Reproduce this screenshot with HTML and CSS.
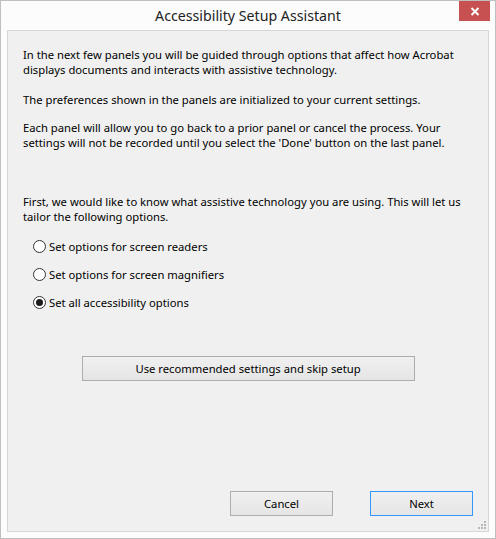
FILE: index.html
```html
<!DOCTYPE html>
<html>
<head>
<meta charset="utf-8">
<link rel="stylesheet" href="styles.css">
</head>
<body>
<div class="window">
  <div class="titlebar">
    <div class="tb-spacer"></div>
    <div class="title">Accessibility Setup Assistant</div>
    <div class="tb-right">
      <div class="close">
        <svg width="10" height="9" viewBox="0 0 10 9"><path d="M1.5 1 L8.5 8 M8.5 1 L1.5 8" stroke="#fff" stroke-width="2" fill="none"/></svg>
      </div>
    </div>
  </div>
  <div class="client">
    <p class="p1">In the next few panels you will be guided through options that affect how Acrobat displays documents and interacts with assistive technology.</p>
    <p class="p2">The preferences shown in the panels are initialized to your current settings.</p>
    <p class="p3">Each panel will allow you to go back to a prior panel or cancel the process. Your settings will not be recorded until you select the 'Done' button on the last panel.</p>
    <p class="p4">First, we would like to know what assistive technology you are using. This will let us tailor the following options.</p>
    <div class="radios">
      <div class="radio"><span class="circle"></span><span>Set options for screen readers</span></div>
      <div class="radio"><span class="circle"></span><span>Set options for screen magnifiers</span></div>
      <div class="radio"><span class="circle checked"></span><span>Set all accessibility options</span></div>
    </div>
    <div class="center-row">
      <div class="btn wide">Use recommended settings and skip setup</div>
    </div>
    <div class="spacer"></div>
    <div class="bottom-row">
      <div class="btn small">Cancel</div>
      <div class="btn small default">Next</div>
    </div>
    <div class="grip">
      <svg width="8" height="8" viewBox="0 0 8 8" fill="#b8b8b8">
        <rect x="6" y="0" width="2" height="2"/>
        <rect x="3" y="3" width="2" height="2"/><rect x="6" y="3" width="2" height="2"/>
        <rect x="0" y="6" width="2" height="2"/><rect x="3" y="6" width="2" height="2"/><rect x="6" y="6" width="2" height="2"/>
      </svg>
    </div>
  </div>
</div>
</body>
</html>
```

FILE: styles.css
```css
html, body {
  margin: 0;
  padding: 0;
  background: #fcfcfc;
}
body {
  font-family: "Noto Sans", "Open Sans", sans-serif;
  font-size: 11.25px;
  color: #000;
}
.window {
  box-sizing: border-box;
  width: 496px;
  height: 539px;
  border: 1px solid #bfbfbf;
  background: #fcfcfc;
  display: flex;
  flex-direction: column;
}
.titlebar {
  height: 29px;
  display: grid;
  grid-template-columns: 1fr auto 1fr;
}
.title {
  font-size: 14.2px;
  color: #222;
  padding-top: 5px;
  line-height: 20px;
}
.tb-right {
  display: flex;
  justify-content: flex-end;
  padding-right: 5px;
}
.close {
  width: 31px;
  height: 20px;
  background: #c75050;
  display: flex;
  align-items: center;
  justify-content: center;
}
.client {
  position: relative;
  box-sizing: border-box;
  margin-left: 6px;
  width: 482px;
  height: 502px;
  border: 1px solid #d6d6d6;
  background: #f0f0f0;
  padding: 16px 15px 15px 15px;
  display: flex;
  flex-direction: column;
  line-height: 15px;
}
p { margin: 0; }
.p2 { margin-top: 15px; }
.p3 { margin-top: 13px; }
.p4 { margin-top: 44px; }
.radios {
  margin-top: 14px;
  padding-left: 10px;
  display: flex;
  flex-direction: column;
  gap: 11px;
}
.radio {
  display: flex;
  align-items: center;
  height: 17px;
  gap: 3px;
}
.circle {
  box-sizing: border-box;
  width: 13px;
  height: 13px;
  border-radius: 50%;
  border: 1px solid #333;
  background: #fff;
  display: flex;
  align-items: center;
  justify-content: center;
}
.circle.checked::after {
  content: "";
  width: 7px;
  height: 7px;
  border-radius: 50%;
  background: #1a1a1a;
}
.center-row {
  margin-top: 45px;
  display: flex;
  justify-content: center;
}
.btn {
  box-sizing: border-box;
  height: 25px;
  border: 1px solid #adadad;
  background: linear-gradient(#f0f0f0, #e5e5e5);
  display: flex;
  align-items: center;
  justify-content: center;
}
.btn.wide { width: 333px; }
.btn.small { width: 103px; }
.btn.default { border-color: #3399ff; }
.spacer { flex: 1; }
.bottom-row {
  display: flex;
  justify-content: flex-end;
  gap: 37px;
}
.grip {
  position: absolute;
  right: 2px;
  bottom: 2px;
  line-height: 0;
}
```
